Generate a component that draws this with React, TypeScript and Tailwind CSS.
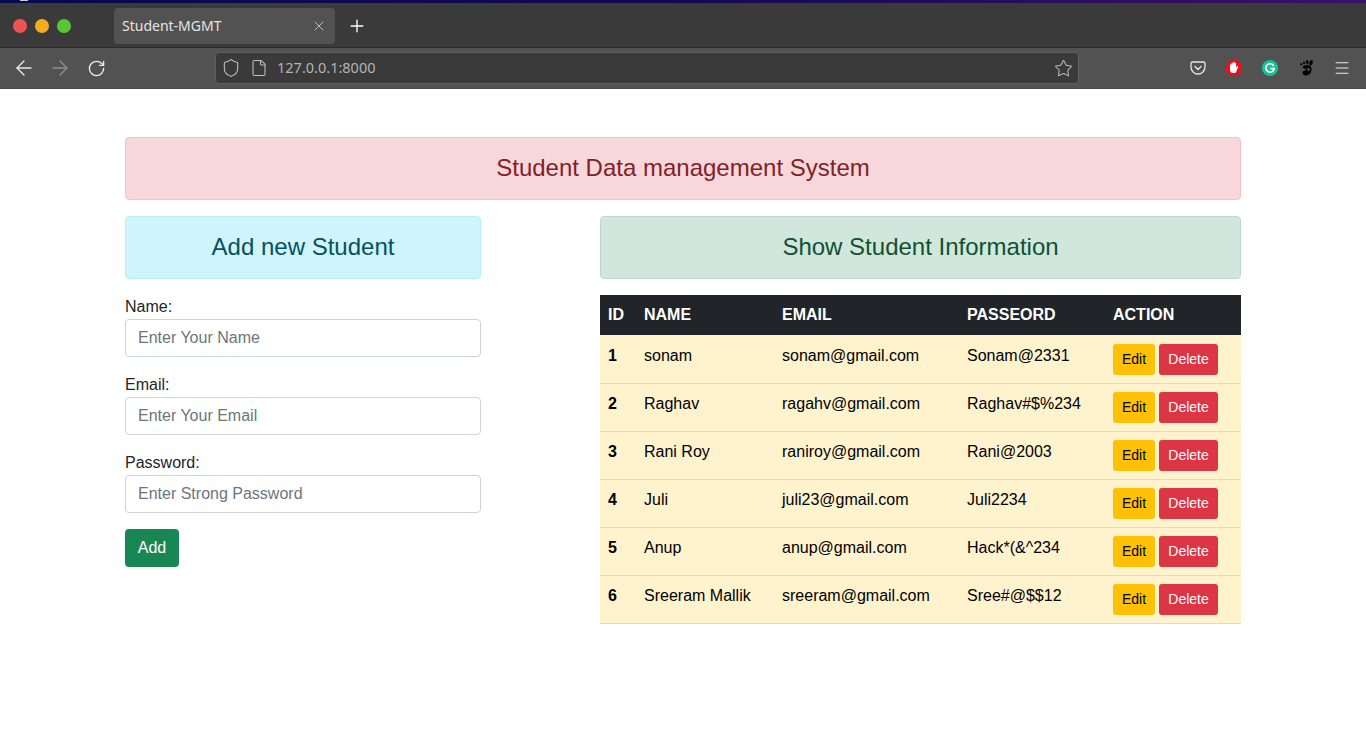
import React from "react";
import { ArrowLeft, ArrowRight, File, Menu, Plus, RotateCw, Shield, Star, X } from "lucide-react";

const students = [
  { id: 1, name: "sonam", email: "sonam@gmail.com", password: "Sonam@2331" },
  { id: 2, name: "Raghav", email: "ragahv@gmail.com", password: "Raghav#$%234" },
  { id: 3, name: "Rani Roy", email: "raniroy@gmail.com", password: "Rani@2003" },
  { id: 4, name: "Juli", email: "juli23@gmail.com", password: "Juli2234" },
  { id: 5, name: "Anup", email: "anup@gmail.com", password: "Hack*(&^234" },
  { id: 6, name: "Sreeram Mallik", email: "sreeram@gmail.com", password: "Sree#@$$12" },
];

const fields = [
  { label: "Name:", placeholder: "Enter Your Name" },
  { label: "Email:", placeholder: "Enter Your Email" },
  { label: "Password:", placeholder: "Enter Strong Password" },
];

// browser window top part
function BrowserChrome() {
  return (
    <div className="font-['Noto_Sans',sans-serif]">
      <div className="h-[3px] bg-gradient-to-r from-[#050a52] via-[#14084f] to-[#3c0f6b]">
        <div className="ml-5 w-2 h-px bg-[#c8c8d8]" />
      </div>
      <div className="h-[45px] bg-[#3a3a3a] border-b border-[#2b2b2b] flex items-center pl-[13px] pt-px">
        <div className="flex gap-2">
          <div className="w-[14px] h-[14px] rounded-full bg-[#ee5350]" />
          <div className="w-[14px] h-[14px] rounded-full bg-[#f4ae1b]" />
          <div className="w-[14px] h-[14px] rounded-full bg-[#55c732]" />
        </div>
        <div className="ml-[43px] w-[221px] h-9 rounded bg-[#525252] flex items-center justify-between pl-2 pr-2 text-[14px] text-[#e4e4e4]">
          <span>Student-MGMT</span>
          <X size={16} strokeWidth={1.3} className="text-[#cfcfcf]" />
        </div>
        <Plus size={20} strokeWidth={1.6} className="ml-3 text-white" />
      </div>
      <div className="h-[41px] bg-[#525252] border-b border-[#4a4a4a] flex items-center pl-3">
        <ArrowLeft size={24} strokeWidth={1.3} className="text-[#ececec]" />
        <ArrowRight size={24} strokeWidth={1.3} className="ml-3 text-[#8e8e8e]" />
        <RotateCw size={19} strokeWidth={1.7} className="ml-[15px] text-[#ececec]" />
        <div className="ml-[109px] w-[864px] h-8 rounded bg-[#3a3a3a] border border-[#5f5f5f] flex items-center pl-[5px] pr-[5px] text-[14.5px] text-[#b4b4b4]">
          <Shield size={20} strokeWidth={1.3} className="text-[#c0c0c0]" />
          <File size={18} strokeWidth={1.4} className="ml-[9px] text-[#c0c0c0]" />
          <span className="ml-[9px]">127.0.0.1:8000</span>
          <Star size={19} strokeWidth={1.3} className="ml-auto text-[#bdbdbd]" />
        </div>
        <div className="ml-[111px] flex items-center gap-5">
          <svg width="16" height="16" viewBox="0 0 16 16" fill="none" stroke="#e6e6e6" strokeWidth="1.3">
            <path d="M2.500 2h11A1.500 1.500 0 0 1 15 3.500V7a7 7 0 0 1-14 0V3.500A1.500 1.500 0 0 1 2.500 2z" />
            <path d="M5 6.500l3 3 3-3" strokeLinecap="round" />
          </svg>
          <svg width="16" height="16" viewBox="0 0 16 16">
            <path d="M5 0h6l5 5v6l-5 5H5l-5-5V5z" fill="#e8101a" />
            <path d="M4 7.500V4.800a.8.8 0 0 1 1.500 0V3.200a.8.8 0 0 1 1.500 0V2.600a.8.8 0 0 1 1.600 0v.6a.8.8 0 0 1 1.500 0v4.300l.9-1.300c.6-.7 1.600 0 1.200.8l-2 4.700c-.4.9-1 1.400-2 1.400H7.300C5.200 13.100 4 11.800 4 9.800z" fill="#fff" />
          </svg>
          <svg width="16" height="16" viewBox="0 0 16 16">
            <circle cx="8" cy="8" r="8" fill="#15c39a" />
            <path d="M11.300 5.300A4.200 4.200 0 1 0 12.200 8.600H9" fill="none" stroke="#fff" strokeWidth="1.600" strokeLinecap="round" />
          </svg>
          <svg width="16" height="16" viewBox="0 0 16 16" fill="#000">
            <ellipse cx="13" cy="2.800" rx="1.700" ry="2.600" transform="rotate(15 13 2.800)" />
            <ellipse cx="9.200" cy="2" rx="1.300" ry="1.900" />
            <ellipse cx="6" cy="2.800" rx="1" ry="1.500" />
            <ellipse cx="3.300" cy="4.300" rx="0.900" ry="1.200" />
            <path d="M9.500 5c2.500 0 4 1.500 4 4.500S11 15.500 8 15.500c-2.300 0-3.500-1.300-3.500-2.800 0-2 3.500-1.800 3.500-3.200 0-1-2.800-.8-3.300-1.900C4.300 6.500 7 5 9.500 5z" />
            <circle cx="10.500" cy="9.500" r="1.400" fill="#525252" />
          </svg>
          <Menu size={18} strokeWidth={1.4} className="-ml-px text-[#ececec]" />
        </div>
      </div>
    </div>
  );
}

export default function App() {
  return (
    <div className="min-h-screen bg-white font-['Liberation_Sans',Arial,sans-serif] text-[#212529] overflow-hidden">
      <BrowserChrome />

      <div className="mx-[125px] mt-12 w-[1116px]">
        <div className="h-[63px] pb-0.5 rounded border border-[#f5c2c7] bg-[#f8d7da] text-[#842029] text-2xl flex items-center justify-center">
          Student Data management System
        </div>

        <div className="mt-4 flex justify-between items-start">
          {/* form */}
          <div className="w-[356px]">
            <div className="h-[63px] pb-0.5 rounded border border-[#b6effb] bg-[#cff4fc] text-[#055160] text-2xl flex items-center justify-center">
              Add new Student
            </div>
            <form className="mt-4">
              {fields.map((f) => (
                <div key={f.label} className="mb-4">
                  <label className="block leading-6">{f.label}</label>
                  <input
                    placeholder={f.placeholder}
                    className="block w-full h-[38px] px-3 rounded border border-[#ced4da] bg-white text-base outline-none placeholder:text-[#6c757d]"
                  />
                </div>
              ))}
              <button type="button" className="w-[54px] h-[38px] rounded bg-[#198754] text-white text-base">
                Add
              </button>
            </form>
          </div>

          {/* table */}
          <div className="w-[641px]">
            <div className="h-[63px] pb-0.5 rounded border border-[#badbcc] bg-[#d1e7dd] text-[#0f5132] text-2xl flex items-center justify-center">
              Show Student Information
            </div>
            <table className="mt-4 w-full table-fixed border-separate border-spacing-0 text-black">
              <colgroup>
                <col className="w-9" />
                <col className="w-[138px]" />
                <col className="w-[185px]" />
                <col className="w-[146px]" />
                <col />
              </colgroup>
              <thead>
                <tr className="h-[41px] bg-[#212529] text-white font-bold text-left">
                  <th className="px-2 border-b border-[#fff3cd]">ID</th>
                  <th className="px-2 border-b border-[#fff3cd]">NAME</th>
                  <th className="px-2 border-b border-[#fff3cd]">EMAIL</th>
                  <th className="px-2 border-b border-[#fff3cd]">PASSEORD</th>
                  <th className="px-2 border-b border-[#fff3cd]">ACTION</th>
                </tr>
              </thead>
              <tbody>
                {students.map((s) => (
                  <tr key={s.id} className="h-12 bg-[#fff3cd]">
                    <td className="px-2 pt-2 align-top leading-6 font-bold border-b border-[#e6dbb9]">{s.id}</td>
                    <td className="px-2 pt-2 align-top leading-6 border-b border-[#e6dbb9]">{s.name}</td>
                    <td className="px-2 pt-2 align-top leading-6 border-b border-[#e6dbb9]">{s.email}</td>
                    <td className="px-2 pt-2 align-top leading-6 border-b border-[#e6dbb9]">{s.password}</td>
                    <td className="px-2 pt-2 align-top border-b border-[#e6dbb9]">
                      <div className="flex gap-1">
                        <button className="w-[42px] h-[31px] pb-0.5 rounded-[3px] bg-[#ffc107] text-black text-sm">Edit</button>
                        <button className="w-[59px] h-[31px] pb-0.5 rounded-[3px] bg-[#dc3545] text-white text-sm">Delete</button>
                      </div>
                    </td>
                  </tr>
                ))}
              </tbody>
            </table>
          </div>
        </div>
      </div>
    </div>
  );
}
